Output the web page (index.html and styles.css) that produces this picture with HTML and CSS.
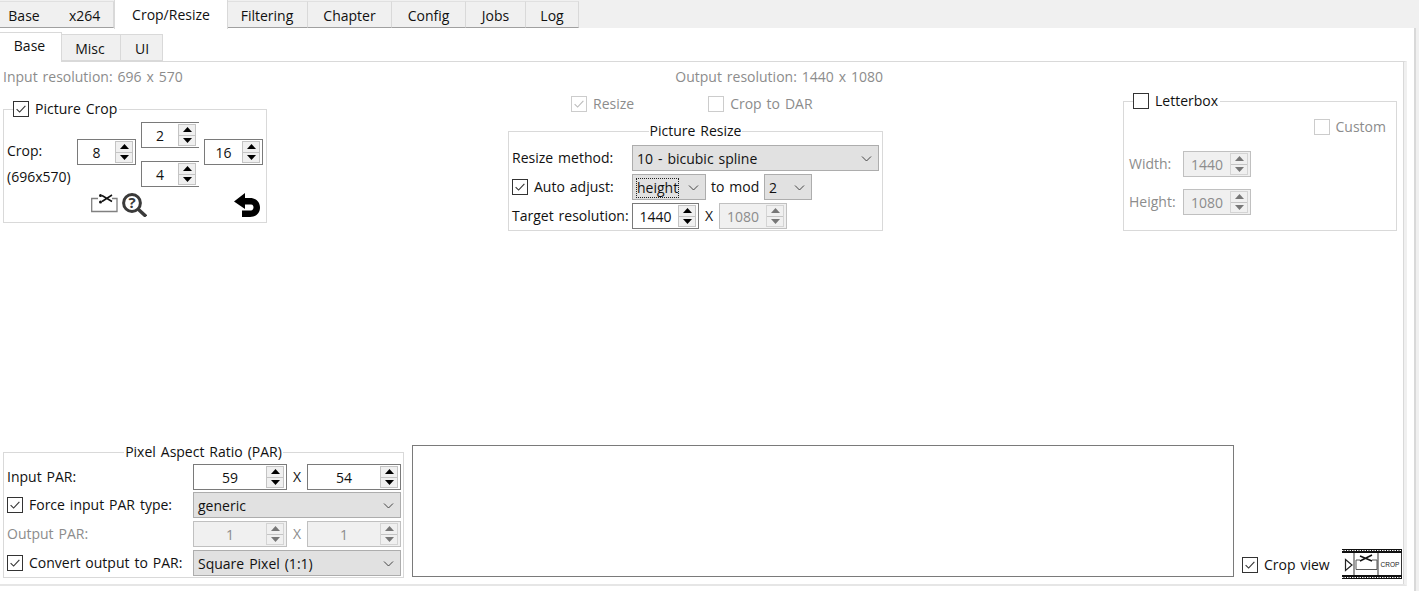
FILE: index.html
```html
<!DOCTYPE html>
<html lang="en">
<head>
<meta charset="utf-8">
<title>Crop/Resize</title>
<link rel="stylesheet" href="styles.css">
</head>
<body>
<svg class="defs" width="0" height="0" aria-hidden="true">
  <symbol id="tick" viewBox="0 0 16 16"><path d="M3 8.2 6.4 11.5 13 4.5" fill="none" stroke="currentColor" stroke-width="1.3"/></symbol>
  <symbol id="chev" viewBox="0 0 10 6"><path d="M.5.5 5 5 9.5.5" fill="none" stroke="currentColor" stroke-width="1"/></symbol>
  <symbol id="up" viewBox="0 0 9 5"><path d="M4.5 0 9 5H0z" fill="currentColor"/></symbol>
  <symbol id="down" viewBox="0 0 9 5"><path d="M0 0H9L4.5 5z" fill="currentColor"/></symbol>
</svg>

<nav class="tabs">
  <span class="tab tab-base">Base</span>
  <span class="tab tab-x264">x264</span>
  <span class="tab tab-crop active">Crop/Resize</span>
  <span class="tab tab-filter">Filtering</span>
  <span class="tab tab-chapter sep">Chapter</span>
  <span class="tab tab-config sep">Config</span>
  <span class="tab tab-jobs sep">Jobs</span>
  <span class="tab tab-log sep">Log</span>
</nav>

<main class="outer">
  <nav class="subtabs">
    <span class="subtab sub-base active">Base</span>
    <span class="subtab sub-misc">Misc</span>
    <span class="subtab sub-ui">UI</span>
  </nav>
  <div class="inner">
    <div class="top">
      <section class="col-left">
        <p class="res off">Input resolution: 696 x 570</p>
        <fieldset class="box crop-box">
          <legend class="legend-check"><span class="check on"><svg><use href="#tick"/></svg></span>Picture Crop</legend>
          <div class="crop-grid">
            <div class="crop-labels"><span>Crop:</span><span>(696x570)</span></div>
            <div class="spin sp-left"><span class="val">8</span><span class="btns"><i><svg><use href="#up"/></svg></i><i><svg><use href="#down"/></svg></i></span></div>
            <div class="spin sp-top open"><span class="val">2</span><span class="btns"><i><svg><use href="#up"/></svg></i><i><svg><use href="#down"/></svg></i></span></div>
            <div class="spin sp-bottom open"><span class="val">4</span><span class="btns"><i><svg><use href="#up"/></svg></i><i><svg><use href="#down"/></svg></i></span></div>
            <div class="spin sp-right"><span class="val">16</span><span class="btns"><i><svg><use href="#up"/></svg></i><i><svg><use href="#down"/></svg></i></span></div>
          </div>
          <div class="crop-tools">
            <svg class="ico-cut" width="27" height="19" viewBox="0 0 27 19">
              <path d="M7 4.500H.7V17.500H26V4.500H21" fill="none" stroke="#808080" stroke-width="1.300"/>
              <path d="M11 1.500 21 7.500M11 7.500 21 1" stroke="#111" stroke-width="1.500"/>
              <circle cx="9.500" cy="1.500" r="1.500" fill="#111"/>
              <circle cx="9.500" cy="8" r="1.500" fill="#111"/>
            </svg>
            <svg class="ico-zoom" width="25" height="24" viewBox="0 0 25 24">
              <circle cx="10" cy="10" r="8.400" fill="none" stroke="#3a3a3a" stroke-width="3"/>
              <path d="M16.500 16.500 24 23.500" stroke="#3a3a3a" stroke-width="3.400"/>
              <text x="10" y="15" text-anchor="middle" class="ico-q">?</text>
            </svg>
            <svg class="ico-undo" width="26" height="24" viewBox="0 0 26 24">
              <path d="M11 0 0 8.500 11 16V11.500H17C19 11.500 19.500 13 19.500 14.500S18.500 17.500 17 17.500H8V24H16C22 24 26 20 26 14.500S22 5 16 5H11z" fill="#000"/>
            </svg>
          </div>
        </fieldset>
      </section>

      <section class="col-mid">
        <p class="res off res-out">Output resolution: 1440 x 1080</p>
        <div class="mid-checks">
          <label class="ck off ck-resize"><span class="check dis"><svg><use href="#tick"/></svg></span>Resize</label>
          <label class="ck off"><span class="check dis"></span>Crop to DAR</label>
        </div>
        <fieldset class="box resize-box">
          <legend class="legend-center">Picture Resize</legend>
          <div class="resize-grid">
            <span>Resize method:</span>
            <div class="combo"><span>10 - bicubic spline</span><svg><use href="#chev"/></svg></div>
            <label class="ck"><span class="check on"><svg><use href="#tick"/></svg></span>Auto adjust:</label>
            <div class="line">
              <div class="combo c-height"><span class="focus">height</span><svg><use href="#chev"/></svg></div>
              <span class="tomod">to mod</span>
              <div class="combo c-mod"><span>2</span><svg><use href="#chev"/></svg></div>
            </div>
            <span>Target resolution:</span>
            <div class="line">
              <div class="spin sp-target"><span class="val">1440</span><span class="btns"><i><svg><use href="#up"/></svg></i><i><svg><use href="#down"/></svg></i></span></div>
              <span class="x">X</span>
              <div class="spin dis sp-target2"><span class="val">1080</span><span class="btns"><i><svg><use href="#up"/></svg></i><i><svg><use href="#down"/></svg></i></span></div>
            </div>
          </div>
        </fieldset>
      </section>

      <section class="col-right">
        <fieldset class="box letter-box">
          <legend class="legend-check"><span class="check on"></span>Letterbox</legend>
          <label class="ck off ck-custom"><span class="check dis"></span>Custom</label>
          <div class="letter-row off"><span>Width:</span>
            <div class="spin dis sp-letter"><span class="val">1440</span><span class="btns"><i><svg><use href="#up"/></svg></i><i><svg><use href="#down"/></svg></i></span></div>
          </div>
          <div class="letter-row off"><span>Height:</span>
            <div class="spin dis sp-letter"><span class="val">1080</span><span class="btns"><i><svg><use href="#up"/></svg></i><i><svg><use href="#down"/></svg></i></span></div>
          </div>
        </fieldset>
      </section>
    </div>

    <div class="bottom">
      <fieldset class="box par-box">
        <legend class="legend-center">Pixel Aspect Ratio (PAR)</legend>
        <div class="par-grid">
          <span>Input PAR:</span>
          <div class="pair">
            <div class="spin"><span class="val">59</span><span class="btns"><i><svg><use href="#up"/></svg></i><i><svg><use href="#down"/></svg></i></span></div>
            <span class="x">X</span>
            <div class="spin"><span class="val">54</span><span class="btns"><i><svg><use href="#up"/></svg></i><i><svg><use href="#down"/></svg></i></span></div>
          </div>
          <label class="ck"><span class="check on"><svg><use href="#tick"/></svg></span>Force input PAR type:</label>
          <div class="combo"><span>generic</span><svg><use href="#chev"/></svg></div>
          <span class="off">Output PAR:</span>
          <div class="pair">
            <div class="spin dis"><span class="val">1</span><span class="btns"><i><svg><use href="#up"/></svg></i><i><svg><use href="#down"/></svg></i></span></div>
            <span class="x off">X</span>
            <div class="spin dis"><span class="val">1</span><span class="btns"><i><svg><use href="#up"/></svg></i><i><svg><use href="#down"/></svg></i></span></div>
          </div>
          <label class="ck"><span class="check on"><svg><use href="#tick"/></svg></span>Convert output to PAR:</label>
          <div class="combo"><span>Square Pixel (1:1)</span><svg><use href="#chev"/></svg></div>
        </div>
      </fieldset>
      <div class="log"></div>
      <label class="ck ck-view"><span class="check on"><svg><use href="#tick"/></svg></span>Crop view</label>
      <svg class="film" width="60" height="30" viewBox="0 0 60 30">
        <rect x="0" y="0" width="60" height="30" fill="#fff"/>
        <rect x="0" y="0" width="60" height="4" fill="#111"/>
        <rect x="0" y="26" width="60" height="4" fill="#111"/>
        <path d="M0 1.500H60M0 28.500H60" stroke="#fff" stroke-dasharray="1.500 1" stroke-width="1.200"/>
        <path d="M12 4V26M36 4V26M59.500 4V26" stroke="#333" stroke-width="1"/>
        <path d="M3.500 10.500 10 16 3.500 21.500z" fill="#fff" stroke="#222" stroke-width="1.200"/>
        <path d="M18 11H14V20.500H35V11H30" fill="none" stroke="#555" stroke-width="1"/>
        <path d="M18 7 30 12M18 12 30 6" stroke="#111" stroke-width="1.500"/>
        <text x="48" y="17.500" text-anchor="middle" class="film-t">CROP</text>
      </svg>
    </div>
  </div>
</main>
</body>
</html>
```
FILE: styles.css
```css
* { box-sizing: border-box; }
html, body { margin: 0; height: 100%; }
body {
  width: 1419px;
  height: 591px;
  overflow: hidden;
  background: #f0f0f0;
  color: #111;
  font: 14px/20px "Open Sans", "Noto Sans", sans-serif;
  word-spacing: 1.3px;
}
.defs { position: absolute; }
p { margin: 0; }
.off { color: #8c8c8c; }

/* top tab strip */
.tabs { display: flex; height: 28px; align-items: flex-start; }
.tab {
  height: 27px;
  margin-top: 1px;
  padding-top: 4px;
  text-align: center;
  border-top: 1px solid #e0e0e0;
  border-bottom: 1px solid #a0a0a0;
}
.tab.sep, .tab-filter { border-right: 1px solid #d9d9d9; }
.tab.active {
  height: 29px;
  margin-top: 0;
  padding-top: 5px;
  background: #fff;
  border: 0;
  border-left: 1px solid #d9d9d9;
  border-right: 1px solid #d9d9d9;
  position: relative;
  z-index: 1;
}
.tab-base { width: 48px; }
.tab-x264 { width: 66px; padding-left: 21px; border-right: 1px solid #d9d9d9; text-align: left; }
.tab-crop { width: 114px; }
.tab-filter { width: 80px; padding-right: 1px; }
.tab-chapter { width: 84px; }
.tab-config { width: 74px; }
.tab-jobs { width: 60px; }
.tab-log { width: 53px; }

.outer {
  width: 1416px;
  height: 563px;
  background: #fff;
  border-right: 2px solid #d9d9d9;
}

/* secondary tabs */
.subtabs { display: flex; height: 33px; padding-top: 4px; align-items: flex-end; }
.subtab {
  height: 27px;
  padding-top: 4px;
  text-align: center;
  background: #f0f0f0;
  border: 1px solid #d9d9d9;
  border-left: 0;
  border-bottom: 1px solid #d9d9d9;
}
.subtab.active {
  height: 30px;
  padding-top: 3px;
  padding-right: 2px;
  background: #fff;
  border-bottom: 0;
}
.sub-base { width: 62px; margin-bottom: -1px; position: relative; }
.sub-misc { width: 59px; padding-right: 2px; }
.sub-ui { width: 42px; padding-left: 1px; }

.inner {
  width: 1407px;
  height: 525px;
  border-top: 1px solid #d9d9d9;
  border-right: 3px solid #f0f0f0;
  border-bottom: 2px solid #e6e6e6;
  box-shadow: inset -1px 0 0 #d9d9d9;
  display: flex;
  flex-direction: column;
  justify-content: space-between;
}

.top { display: flex; }
.col-left { width: 508px; padding: 5px 0 0 3px; }
.col-mid { width: 375px; padding-top: 5px; }
.col-right { margin-left: 240px; width: 274px; padding-top: 29px; }

.res { height: 20px; }
.res-out { text-align: right; }
.mid-checks { display: flex; margin-top: 7px; padding-left: 63px; gap: 74px; height: 20px; }

/* group boxes */
.box {
  margin: 0;
  padding: 0;
  min-width: 0;
  border: 1px solid #d9d9d9;
  display: block;
}
legend { padding: 0; line-height: 20px; }
.legend-check { display: flex; align-items: center; padding: 0 2px 0 0; background: #fff; }
.legend-center { margin: 0 auto; padding: 0 1px; }

/* checkboxes */
.check {
  flex: none;
  display: inline-block;
  width: 16px;
  height: 16px;
  margin-right: 6px;
  border: 1px solid #333;
  background: #fff;
  color: #333;
}
.check svg { display: block; width: 14px; height: 14px; }
.check.dis { border-color: #ccc; color: #bbb; }
.ck { display: flex; align-items: center; height: 20px; }

/* spin boxes */
.spin {
  display: flex;
  align-items: center;
  height: 26px;
  border: 1px solid #7a7a7a;
  background: #fff;
  padding-right: 2px;
}
.spin.open { border-right: 0; padding-right: 3px; }
.spin .val { flex: 1; text-align: center; padding-top: 1px; }
.btns { flex: none; width: 18px; height: 22px; display: flex; flex-direction: column; background: #f0f0f0; border: 1px solid #c4c4c4; color: #000; }
.btns i { flex: 1; display: flex; align-items: center; justify-content: center; }
.btns i + i { border-top: 1px solid #c4c4c4; }
.btns svg { display: block; width: 9px; height: 5px; }
.spin.dis { border-color: #c0c0c0; background: #f0f0f0; color: #8c8c8c; }
.spin.dis .btns { color: #777; border-color: #d4d4d4; }

/* combos */
.combo {
  display: flex;
  align-items: center;
  justify-content: space-between;
  height: 26px;
  padding: 1px 6px 0 4px;
  background: #e1e1e1;
  border: 1px solid #adadad;
}
.combo svg { flex: none; width: 11px; height: 6px; color: #444; }

/* crop */
.crop-box { width: 264px; height: 124px; margin-top: 12px; padding: 0 0 0 3px; }
.crop-box .legend-check { margin-left: 6px; }
.crop-grid {
  display: grid;
  grid-template-columns: 70px 59px 5px 58px 5px 59px;
  grid-template-rows: 17px 9px 13px 4px 22px;
  margin-top: 3px;
}
.crop-labels { grid-column: 1; grid-row: 1 / 6; display: flex; flex-direction: column; padding-top: 19px; gap: 6px; }
.sp-left { grid-column: 2; grid-row: 2 / 5; }
.sp-top { grid-column: 4; grid-row: 1 / 3; }
.sp-bottom { grid-column: 4; grid-row: 4 / 6; }
.sp-right { grid-column: 6; grid-row: 2 / 5; }
.crop-tools { display: flex; align-items: flex-start; padding-left: 84px; margin-top: 6px; gap: 4px; }
.ico-cut { margin-top: 1px; }
.ico-undo { margin-left: 83px; }
.ico-q { font: 700 15px "Open Sans", sans-serif; fill: #3a3a3a; }

/* resize */
.resize-box { height: 110px; margin-top: 7px; padding: 0 3px; }
.resize-grid {
  display: grid;
  grid-template-columns: 120px 247px;
  grid-auto-rows: 26px;
  row-gap: 3px;
  align-items: center;
  margin-top: 4px;
}
.line { display: flex; align-items: center; height: 26px; }
.c-height { width: 74px; }
.focus { outline: 1px dotted #222; line-height: 18px; }
.tomod { margin: 0 5px; width: 48px; white-space: nowrap; }
.c-mod { width: 48px; }
.sp-target { width: 67px; }
.sp-target2 { width: 68px; }
.line .x { width: 20px; text-align: center; }

/* letterbox */
.letter-box { height: 140px; padding: 0 5px; }
.letter-box .legend-check { margin-left: 4px; }
.ck-custom { justify-content: flex-end; margin: 6px 5px 14px 0; }
.letter-row { display: flex; align-items: center; justify-content: space-between; width: 122px; height: 26px; margin-bottom: 12px; }
.sp-letter { width: 68px; }

/* bottom */
.bottom { display: flex; align-items: flex-end; padding: 0 0 6px 3px; }
.par-box { width: 401px; height: 136px; padding: 0 3px; }
.par-grid {
  display: grid;
  grid-template-columns: 186px 208px;
  grid-template-rows: 28px 29px 29px 26px;
  align-items: start;
  margin-top: 2px;
}
.par-grid > span, .par-grid > .ck { line-height: 26px; height: 26px; }
.pair { display: grid; grid-template-columns: 94px 20px 94px; }
.pair .x { text-align: center; line-height: 26px; }
.log { width: 822px; height: 132px; margin: 0 0 1px 8px; border: 1px solid #7a7a7a; background: #fff; }
.ck-view { margin: 0 0 3px 8px; width: 100px; height: 20px; }
.film { margin: 0 0 -1px 0; }
.film-t { font: 6.500px "Liberation Sans", sans-serif; fill: #222; word-spacing: 0; }
```
